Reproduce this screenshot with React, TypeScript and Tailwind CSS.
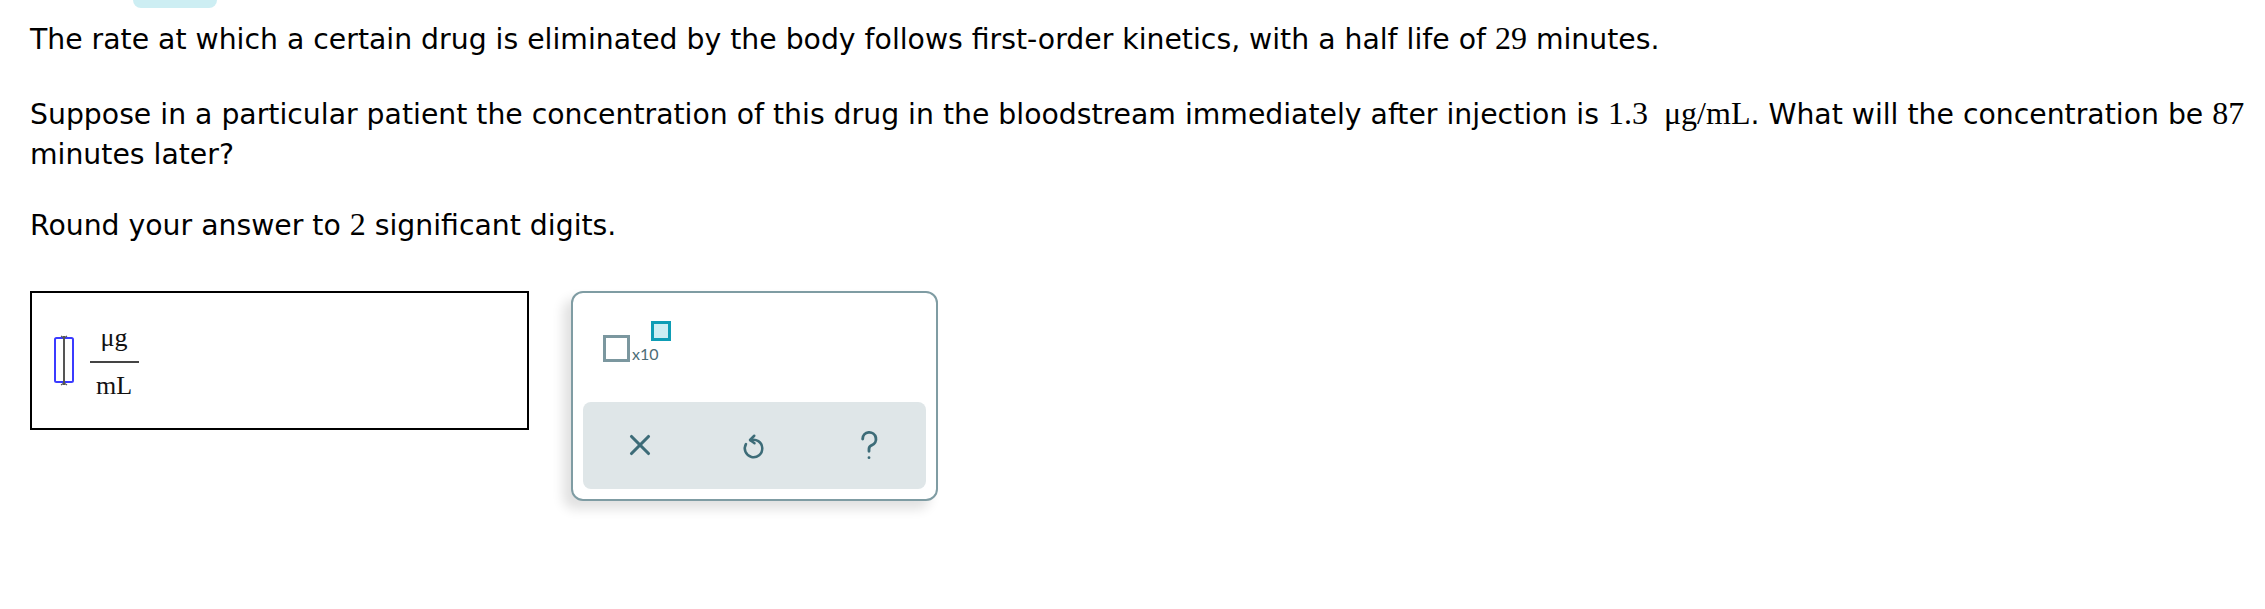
import { X } from 'lucide-react'

const sans = { fontFamily: '"DejaVu Sans", Verdana, sans-serif' }
const serif = { fontFamily: '"Liberation Serif", "Times New Roman", serif' }

function M({ children }: { children: React.ReactNode }) {
  return (
    <span className="text-[32px] leading-none" style={serif}>
      {children}
    </span>
  )
}

function Cursor() {
  return (
    <svg width="24" height="56" viewBox="0 0 24 56" className="shrink-0">
      <rect x="3" y="5" width="18" height="44" rx="1.5" fill="none" stroke="#3b3bff" strokeWidth="2" />
      <line x1="12" y1="3" x2="12" y2="52" stroke="#555" strokeWidth="2" />
      <path d="M9 3 L12 5 L15 3 M9 52 L12 50 L15 52" fill="none" stroke="#555" strokeWidth="1.2" />
    </svg>
  )
}

function Undo() {
  return (
    <svg width="30" height="30" viewBox="0 0 24 24" fill="none" stroke="currentColor" strokeWidth="2" strokeLinecap="round" strokeLinejoin="round">
      <path d="M9.2 8.2 A7 7 0 1 1 5.6 11.2" />
      <path d="M12.2 4.6 L8.8 8 L12.4 10.6" />
    </svg>
  )
}

function Help() {
  return (
    <svg width="38" height="38" viewBox="0 0 24 24" fill="none" stroke="currentColor" strokeWidth="1.8" strokeLinecap="round">
      <path d="M8 8.2 A4.2 4.2 0 1 1 13.6 12.2 C12.5 12.7 12 13.4 12 14.6 V16" />
      <circle cx="12" cy="20" r="0.9" fill="currentColor" stroke="none" />
    </svg>
  )
}

export default function App() {
  return (
    <div className="min-h-screen w-[2265px] bg-white text-[28.3px] leading-[40px] text-black" style={sans}>
      <div className="ml-[133px] h-[8px] w-[84px] rounded-b-[14px] bg-[#cdeef3]" />

      <div className="pl-[30px] pr-[8px] pt-[12px]">
        <p className="whitespace-nowrap">
          The rate at which a certain drug is eliminated by the body follows first-order kinetics, with a half life of{' '}
          <M>29</M> minutes.
        </p>

        <p className="mt-[35px]">
          <span className="whitespace-nowrap">
            Suppose in a particular patient the concentration of this drug in the bloodstream immediately after injection
            is <M>1.3&nbsp;&nbsp;μg/mL</M>. What will the concentration be <M>87</M>
          </span>
          <br />
          minutes later?
        </p>

        <p className="mt-[31px]">
          Round your answer to <M>2</M> significant digits.
        </p>

        <div className="mt-[45px] flex items-start gap-[42px]">
          {/* answer box */}
          <div className="flex h-[139px] w-[499px] items-center gap-[12px] border-2 border-black pl-[20px]">
            <Cursor />
            <div className="mt-[2px] flex flex-col items-center text-[26px] leading-[34px] text-[#111]" style={serif}>
              <span className="px-[8px]">μg</span>
              <span className="my-[6px] h-[2px] w-[49px] bg-[#444]" />
              <span className="px-[8px]">mL</span>
            </div>
          </div>

          {/* keypad */}
          <div className="flex h-[210px] w-[367px] flex-col rounded-[12px] border-2 border-[#7f9ca3] bg-white p-[10px] shadow-[-8px_8px_12px_rgba(0,0,0,0.12)]">
            <div className="flex h-[100px] items-start pl-[20px] pt-[7px]">
              <div className="relative mt-[25px] flex items-end">
                <span className="h-[27px] w-[27px] border-[3px] border-[#7b979f]" />
                <span className="ml-[2px] text-[16px] leading-[16px] text-[#4b6c76]" style={{ fontFamily: 'Lato, sans-serif' }}>
                  x10
                </span>
                <span className="absolute left-[48px] top-[-14px] h-[20px] w-[20px] border-[3px] border-[#0e9db5] bg-[#cdeef3]" />
              </div>
            </div>
            <div className="grid h-[88px] grid-cols-3 place-items-center rounded-[8px] bg-[#dfe6e8] text-[#3d6c78]">
              <X size={34} strokeWidth={2.2} />
              <Undo />
              <Help />
            </div>
          </div>
        </div>
      </div>
    </div>
  )
}
